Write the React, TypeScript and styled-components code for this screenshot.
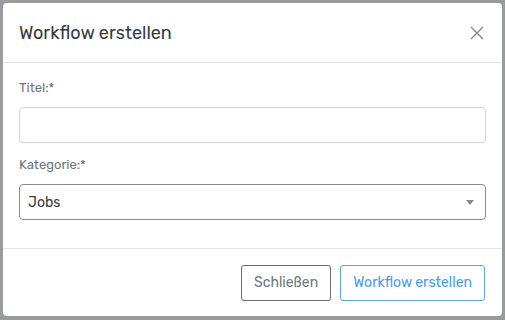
import React from 'react';
import styled, { createGlobalStyle } from 'styled-components';

const GlobalStyle = createGlobalStyle`
    html, body {
        margin: 0;
        padding: 0;
        background: #9a9b9e;
    }
    body {
        font-family: Rubik, "Noto Sans", "Open Sans", sans-serif;
    }
`;

const Backdrop = styled.div`
    width: 505px;
    height: 320px;
    box-sizing: border-box;
    padding: 3px 3px 4px 3px;
    display: flex;
`;

const Modal = styled.div`
    flex: 1;
    background: #fff;
    border-radius: 4px;
    display: flex;
    flex-direction: column;
`;

const Header = styled.div`
    height: 60px;
    box-sizing: border-box;
    padding: 0 16px;
    display: flex;
    align-items: center;
    justify-content: space-between;
    border-bottom: 1px solid #e6e6e6;
`;

const Title = styled.h5`
    margin: 0;
    font-size: 18px;
    font-weight: 400;
    color: #343a40;
`;

const CloseButton = styled.button`
    border: 0;
    background: none;
    padding: 0;
    width: 16px;
    height: 16px;
    display: flex;
    margin-right: 1px;
    cursor: pointer;
`;

const Body = styled.div`
    flex: 1;
    padding: 16px 16px 0 16px;
    display: flex;
    flex-direction: column;
    border-bottom: 1px solid #e6e6e6;
`;

const Field = styled.div`
    display: flex;
    flex-direction: column;
    margin-bottom: 13px;
`;

const Label = styled.label`
    font-size: 13px;
    color: #6c757d;
    margin-bottom: 10px;
    line-height: 18px;
`;

const TextInput = styled.input`
    height: 36px;
    box-sizing: border-box;
    border: 1px solid #ced4da;
    border-radius: 4px;
    padding: 0 8px;
    font: inherit;
`;

const SelectBox = styled.div`
    height: 36px;
    box-sizing: border-box;
    border: 1px solid #8a8a8a;
    border-radius: 4px;
    padding: 0 8px;
    display: flex;
    align-items: center;
    justify-content: space-between;
    font-size: 14px;
    color: #343a40;
`;

const Caret = styled.span`
    width: 0;
    height: 0;
    border-left: 4px solid transparent;
    border-right: 4px solid transparent;
    border-top: 5px solid #888;
    margin-right: 3px;
`;

const Footer = styled.div`
    height: 67px;
    box-sizing: border-box;
    padding: 0 17px 0 16px;
    display: flex;
    align-items: center;
    justify-content: flex-end;
    gap: 9px;
`;

const Button = styled.button<{ $primary?: boolean }>`
    height: 36px;
    box-sizing: border-box;
    padding: 0 12px;
    border-radius: 3px;
    background: #fff;
    font: inherit;
    font-size: 14px;
    border: 1px solid ${p => (p.$primary ? '#5aa5f5' : '#6c6c6c')};
    color: ${p => (p.$primary ? '#4a9af0' : '#6c757d')};
    cursor: pointer;
`;

export default function App() {
    return (
        <>
            <GlobalStyle />
            <Backdrop>
                <Modal>
                    <Header>
                        <Title>Workflow erstellen</Title>
                        <CloseButton aria-label="close">
                            <svg width="16" height="16" viewBox="0 0 16 16">
                                <path d="M2 2 L14 14 M14 2 L2 14" stroke="#888" strokeWidth="1.4" />
                            </svg>
                        </CloseButton>
                    </Header>
                    <Body>
                        <Field>
                            <Label>Titel:*</Label>
                            <TextInput />
                        </Field>
                        <Field>
                            <Label>Kategorie:*</Label>
                            <SelectBox>
                                Jobs
                                <Caret />
                            </SelectBox>
                        </Field>
                    </Body>
                    <Footer>
                        <Button>Schließen</Button>
                        <Button $primary>Workflow erstellen</Button>
                    </Footer>
                </Modal>
            </Backdrop>
        </>
    );
}
